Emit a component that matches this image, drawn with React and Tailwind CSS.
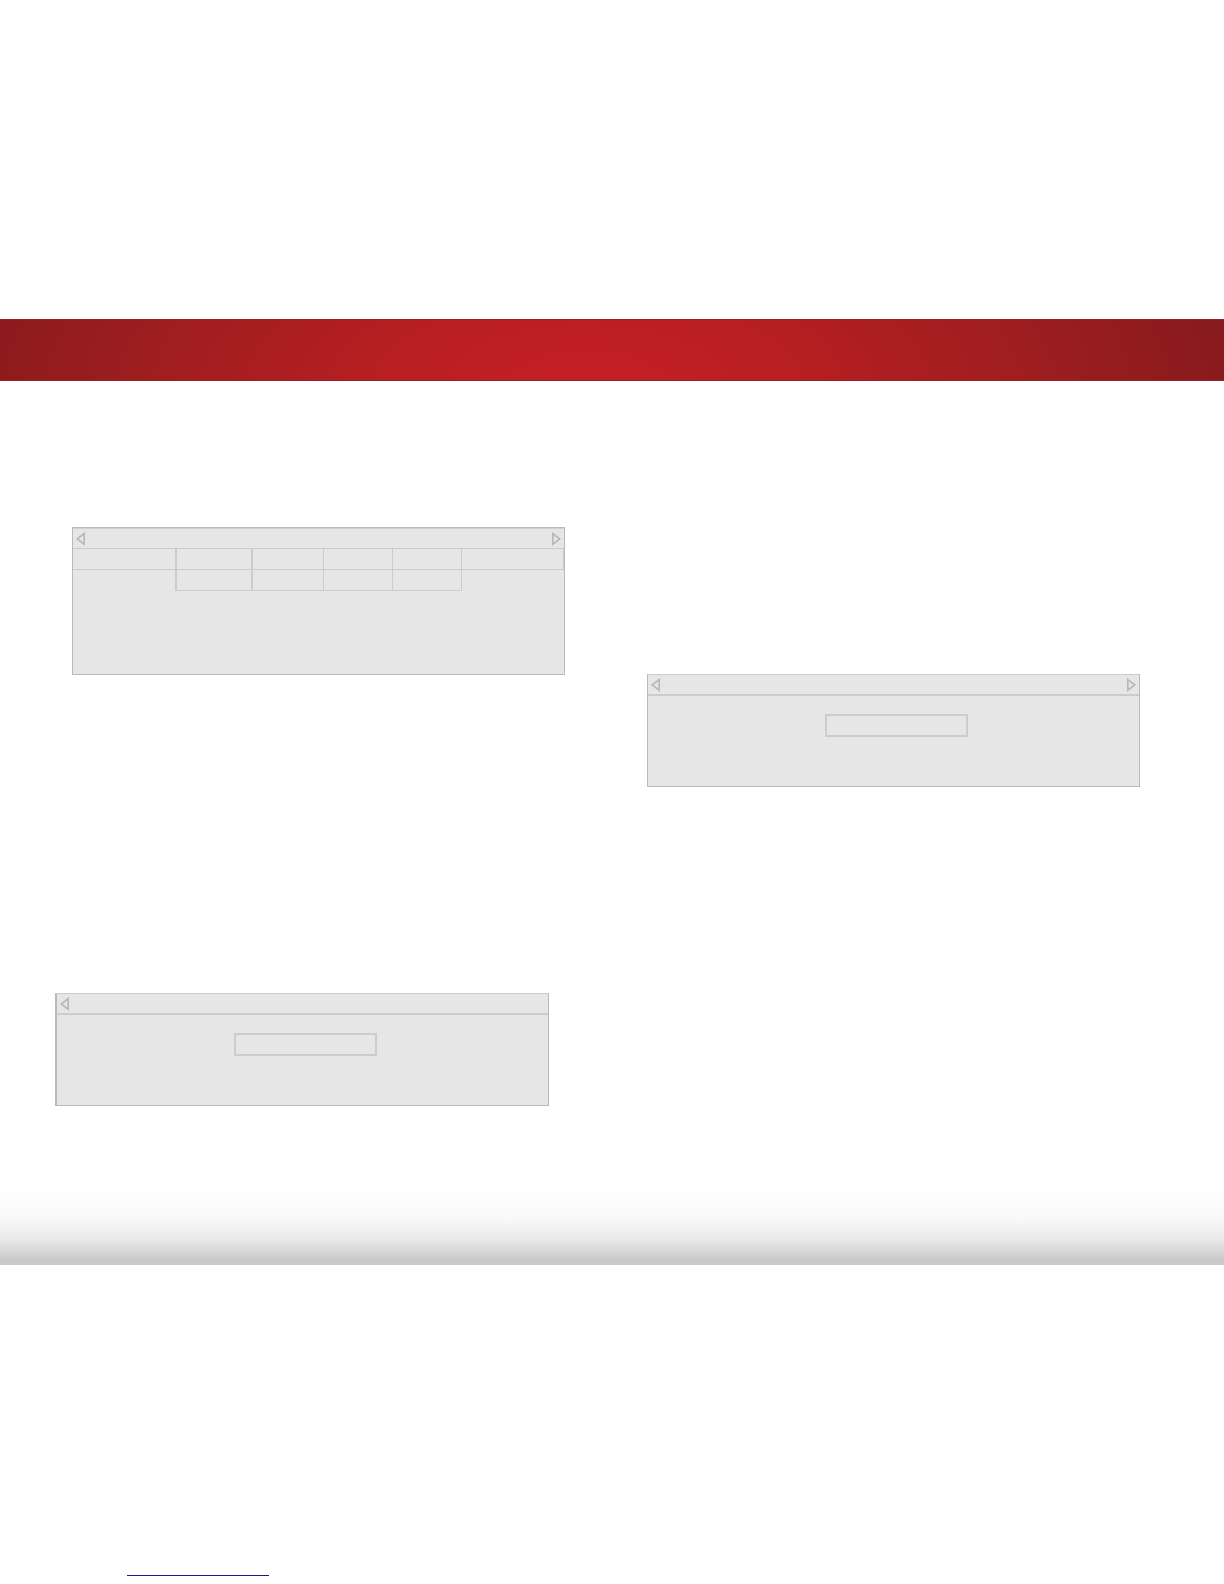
// App.jsx
import clsx from "clsx"

function ArrowButton({ direction }) {
  const isLeft = direction === "left"

  return (
    <button type="button" aria-label={isLeft ? "Previous" : "Next"} className="block shrink-0">
      <svg width="10" height="14" viewBox="0 0 10 14" fill="none" stroke="#b9b9b9" strokeWidth="1.7">
        <path d={isLeft ? "M8.2 1.6V12.2L1.3 6.9Z" : "M1.8 1.6V12.2L8.7 6.9Z"} />
      </svg>
    </button>
  )
}

function TitleBar({ hasNext = true, className }) {
  return (
    <div className={clsx("flex items-center justify-between px-[3px]", className)}>
      <ArrowButton direction="left" />
      {hasNext && <ArrowButton direction="right" />}
    </div>
  )
}

function TablePanel() {
  return (
    <section className="ml-[72px] mr-[47px] border border-[#b9b9b9] bg-[#e6e6e6] pb-[83px]">
      <TitleBar className="h-[21px] border-b border-t border-b-[#cbcbcb] border-t-[#d0d0d0]" />
      <table className="w-full table-fixed border-separate border-spacing-0">
        <colgroup>
          <col className="w-[102px]" />
          <col className="w-[76px]" />
          <col className="w-[72px]" />
          <col className="w-[69px]" />
          <col className="w-[69px]" />
          <col />
        </colgroup>
        <thead>
          <tr className="h-[21px]">
            <th scope="col" className="border-b border-[#cccccc] p-0" />
            <th scope="col" className="border-b border-l-2 border-[#cccccc] p-0" />
            <th scope="col" className="border-b border-l-2 border-[#cccccc] p-0" />
            <th scope="col" className="border-b border-l border-[#cccccc] p-0" />
            <th scope="col" className="border-b border-l border-[#cccccc] p-0" />
            <th scope="col" className="border-b border-l border-r border-[#cccccc] p-0" />
          </tr>
        </thead>
        <tbody>
          <tr className="h-[21px]">
            <td className="p-0" />
            <td className="border-b border-l-2 border-[#cccccc] p-0" />
            <td className="border-b border-l-2 border-[#cccccc] p-0" />
            <td className="border-b border-l border-[#cccccc] p-0" />
            <td className="border-b border-l border-[#cccccc] p-0" />
            <td className="border-l border-[#cccccc] p-0" />
          </tr>
        </tbody>
      </table>
    </section>
  )
}

function FieldPanel({ label, hasNext, className }) {
  return (
    <section className={clsx("border border-[#b9b9b9] border-t-[#cbcbcb] bg-[#e6e6e6]", className)}>
      <TitleBar hasNext={hasNext} className="h-[21px] border-b-2 border-[#cccccc]" />
      <div className="flex justify-center pb-[49px] pl-1.5 pt-[18px]">
        <input
          type="text"
          aria-label={label}
          className="h-[23px] w-[143px] border-2 border-[#cccccc] bg-transparent px-2 text-xs outline-none"
        />
      </div>
    </section>
  )
}

export default function App() {
  return (
    <div className="bg-white pb-2 pt-[319px] font-['Liberation_Sans',sans-serif]">
      {/* Banner */}
      <header className="h-[62px] border-y border-[#8b2424] bg-[radial-gradient(ellipse_54%_480%_at_48%_110%,#c52025_0%,#b91f22_30%,#ad1e21_46%,#a11e20_63%,#951c1e_80%,#861a1c_100%)]" />

      {/* Panels */}
      <main className="grid grid-cols-2">
        <div className="pt-[146px]">
          <TablePanel />
          <FieldPanel label="Left field" hasNext={false} className="ml-[55px] mr-[63px] mt-[318px] border-l-2" />
        </div>
        <div className="pt-[293px]">
          <FieldPanel label="Right field" hasNext className="ml-[35px] mr-[84px]" />
        </div>
      </main>

      {/* Bottom fade */}
      <div className="mt-[84px] h-[75px] bg-[linear-gradient(to_bottom,#ffffff_0%,#f8f8f8_40%,#e9e9e9_66%,#d4d4d4_84%,#c9c9c9_93%,#c9c9c9_100%)]" />

      <footer className="pl-[127px] pt-[295px]">
        <a href="#top" aria-label="Website" className="block h-4 w-[142px] border-b border-[#1a1a8c]" />
      </footer>
    </div>
  )
}
